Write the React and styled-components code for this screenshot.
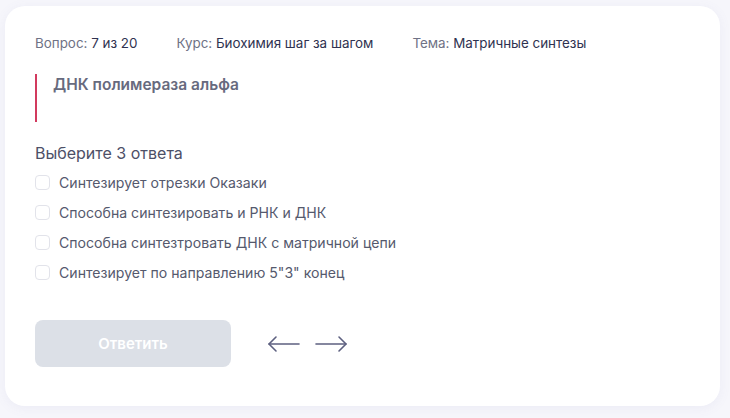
import React from "react"
import styled, { createGlobalStyle } from "styled-components"

const GlobalStyle = createGlobalStyle`
  html, body {
    margin: 0;
    padding: 0;
    background: #f6f6fb;
    font-family: Inter, Roboto, "Noto Sans", sans-serif;
  }
`

const Page = styled.div`
  width: 730px;
  height: 418px;
  padding: 6px 10px 12px 5px;
  box-sizing: border-box;
`

const Card = styled.div`
  width: 715px;
  height: 400px;
  box-sizing: border-box;
  background: #fff;
  border-radius: 20px;
  box-shadow: 0 2px 12px rgba(120, 120, 180, 0.08);
  padding: 28px 30px;
  display: flex;
  flex-direction: column;
`

const Meta = styled.div`
  display: flex;
  gap: 39px;
  font-size: 13.4px;
  line-height: 18px;
`

const MetaItem = styled.span`
  color: #6f7285;
  b {
    font-weight: 400;
    color: #2f3250;
  }
`

const Question = styled.div`
  margin-top: 22px;
  height: 47px;
  border-left: 2px solid #d23a5e;
  padding: 1px 0 0 16px;
  font-size: 15.5px;
  font-weight: 600;
  color: #676a7e;
`

const Prompt = styled.div`
  margin-top: 21px;
  font-size: 16px;
  color: #4d5067;
`

const Options = styled.div`
  display: flex;
  flex-direction: column;
  gap: 10px;
  margin-top: 9px;
`

const Option = styled.label`
  display: flex;
  align-items: center;
  gap: 9px;
  height: 20px;
  font-size: 14.1px;
  color: #55596d;
`

const Box = styled.span`
  width: 15px;
  height: 15px;
  border: 1px solid #e2e3ea;
  border-radius: 4px;
  box-sizing: border-box;
  display: inline-block;
`

const Footer = styled.div`
  display: flex;
  align-items: center;
  gap: 36px;
  margin-top: 38px;
`

const Submit = styled.button`
  width: 196px;
  height: 47px;
  border: none;
  border-radius: 8px;
  background: #dce0e7;
  color: #fff;
  font-family: inherit;
  font-size: 15px;
  font-weight: 600;
`

const Arrows = styled.div`
  display: flex;
  gap: 13px;
  color: #5d6080;
`

const Arrow = ({ dir }) => (
  <svg width="34" height="20" viewBox="0 0 34 20" fill="none" stroke="currentColor" strokeWidth="1.6" strokeLinecap="round" strokeLinejoin="round">
    {dir === "left" ? (
      <>
        <path d="M2 10H32" />
        <path d="M9 3L2 10L9 17" />
      </>
    ) : (
      <>
        <path d="M2 10H32" />
        <path d="M25 3L32 10L25 17" />
      </>
    )}
  </svg>
)

const answers = [
  "Синтезирует отрезки Оказаки",
  "Способна синтезировать и РНК и ДНК",
  "Способна синтезтровать ДНК с матричной цепи",
  "Синтезирует по направлению 5\"3\" конец",
]

export default function App() {
  return (
    <Page>
      <GlobalStyle />
      <Card>
        <Meta>
          <MetaItem>Вопрос: <b>7 из 20</b></MetaItem>
          <MetaItem>Курс: <b>Биохимия шаг за шагом</b></MetaItem>
          <MetaItem>Тема: <b>Матричные синтезы</b></MetaItem>
        </Meta>
        <Question>ДНК полимераза альфа</Question>
        <Prompt>Выберите 3 ответа</Prompt>
        <Options>
          {answers.map(a => (
            <Option key={a}>
              <Box />
              {a}
            </Option>
          ))}
        </Options>
        <Footer>
          <Submit>Ответить</Submit>
          <Arrows>
            <Arrow dir="left" />
            <Arrow dir="right" />
          </Arrows>
        </Footer>
      </Card>
    </Page>
  )
}
